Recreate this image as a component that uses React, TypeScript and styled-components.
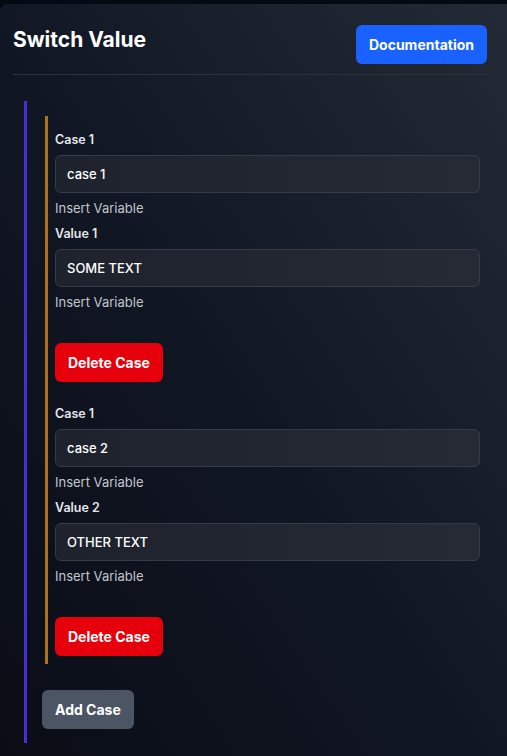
import styled, { createGlobalStyle } from 'styled-components'

type CaseItem = {
  id: number
  caseValue: string
  value: string
}

const cases: CaseItem[] = [
  { id: 1, caseValue: 'case 1', value: 'SOME TEXT' },
  { id: 2, caseValue: 'case 2', value: 'OTHER TEXT' },
]

const GlobalStyle = createGlobalStyle`
  html, body {
    margin: 0;
    padding: 0;
    background: #050a12;
    font-family: Inter, "Noto Sans", "Liberation Sans", sans-serif;
    -webkit-font-smoothing: antialiased;
  }
  * {
    box-sizing: border-box;
  }
`

const Panel = styled.section`
  margin-top: 4px;
  min-height: 752px;
  padding: 21px 20px 14px 13px;
  border-top-left-radius: 8px;
  background: linear-gradient(to top right, #0a0d16 0%, #111724 50%, #242a35 100%);
  color: #f3f4f6;
`

const Header = styled.header`
  display: flex;
  align-items: center;
  justify-content: space-between;
  padding-bottom: 10px;
  border-bottom: 1px solid #2b313d;
`

const Title = styled.h2`
  margin: 0;
  font-size: 21px;
  font-weight: 700;
  color: #ffffff;
  position: relative;
  top: -5px;
`

type ButtonProps = {
  $tone: 'primary' | 'danger' | 'muted'
}

const toneColors = {
  primary: '#1a62ff',
  danger: '#e6000b',
  muted: '#4b5563',
}

const Button = styled.button<ButtonProps>`
  height: 39px;
  padding: 0 13px;
  border: none;
  border-radius: 6px;
  background: ${(p) => toneColors[p.$tone]};
  color: #ffffff;
  font-family: inherit;
  font-size: 14px;
  font-weight: 700;
  cursor: pointer;
`

const SwitchBlock = styled.div`
  margin: 26px 0 0 11px;
  padding: 15px 0 14px 18px;
  border-left: 3px solid #4a2ed1;
`

const CaseList = styled.div`
  border-left: 3px solid #ad7219;
  padding: 0 7px;
`

const CaseBlock = styled.div`
  display: flex;
  flex-direction: column;
  align-items: flex-start;
  padding: 16px 0 8px;
`

const Label = styled.label`
  font-size: 12.5px;
  line-height: 16px;
  font-weight: 600;
  color: #e4e6ea;
`

const Input = styled.input`
  width: 100%;
  height: 38px;
  margin-top: 7px;
  padding: 0 11px;
  border: 1px solid #353b47;
  border-radius: 6px;
  background: linear-gradient(to right, #1d222d, #252a35);
  color: #ffffff;
  font-family: inherit;
  font-size: 13px;
  font-weight: 500;
  outline: none;
`

const Hint = styled.span`
  margin-top: 5px;
  font-size: 13px;
  line-height: 20px;
  color: #c2c6cd;

  & + ${Label} {
    margin-top: 8px;
  }
`

const DeleteRow = styled.div`
  margin-top: 31px;
`

const AddRow = styled.div`
  margin-top: 26px;
  margin-left: -3px;
`

function CaseFields({ item }: { item: CaseItem }) {
  return (
    <CaseBlock>
      <Label>Case 1</Label>
      <Input defaultValue={item.caseValue} />
      <Hint>Insert Variable</Hint>
      <Label>Value {item.id}</Label>
      <Input defaultValue={item.value} />
      <Hint>Insert Variable</Hint>
      <DeleteRow>
        <Button $tone="danger">Delete Case</Button>
      </DeleteRow>
    </CaseBlock>
  )
}

export default function App() {
  return (
    <>
      <GlobalStyle />
      <Panel>
        <Header>
          <Title>Switch Value</Title>
          <Button $tone="primary">Documentation</Button>
        </Header>
        <SwitchBlock>
          <CaseList>
            {cases.map((item) => (
              <CaseFields key={item.id} item={item} />
            ))}
          </CaseList>
          <AddRow>
            <Button $tone="muted">Add Case</Button>
          </AddRow>
        </SwitchBlock>
      </Panel>
    </>
  )
}
